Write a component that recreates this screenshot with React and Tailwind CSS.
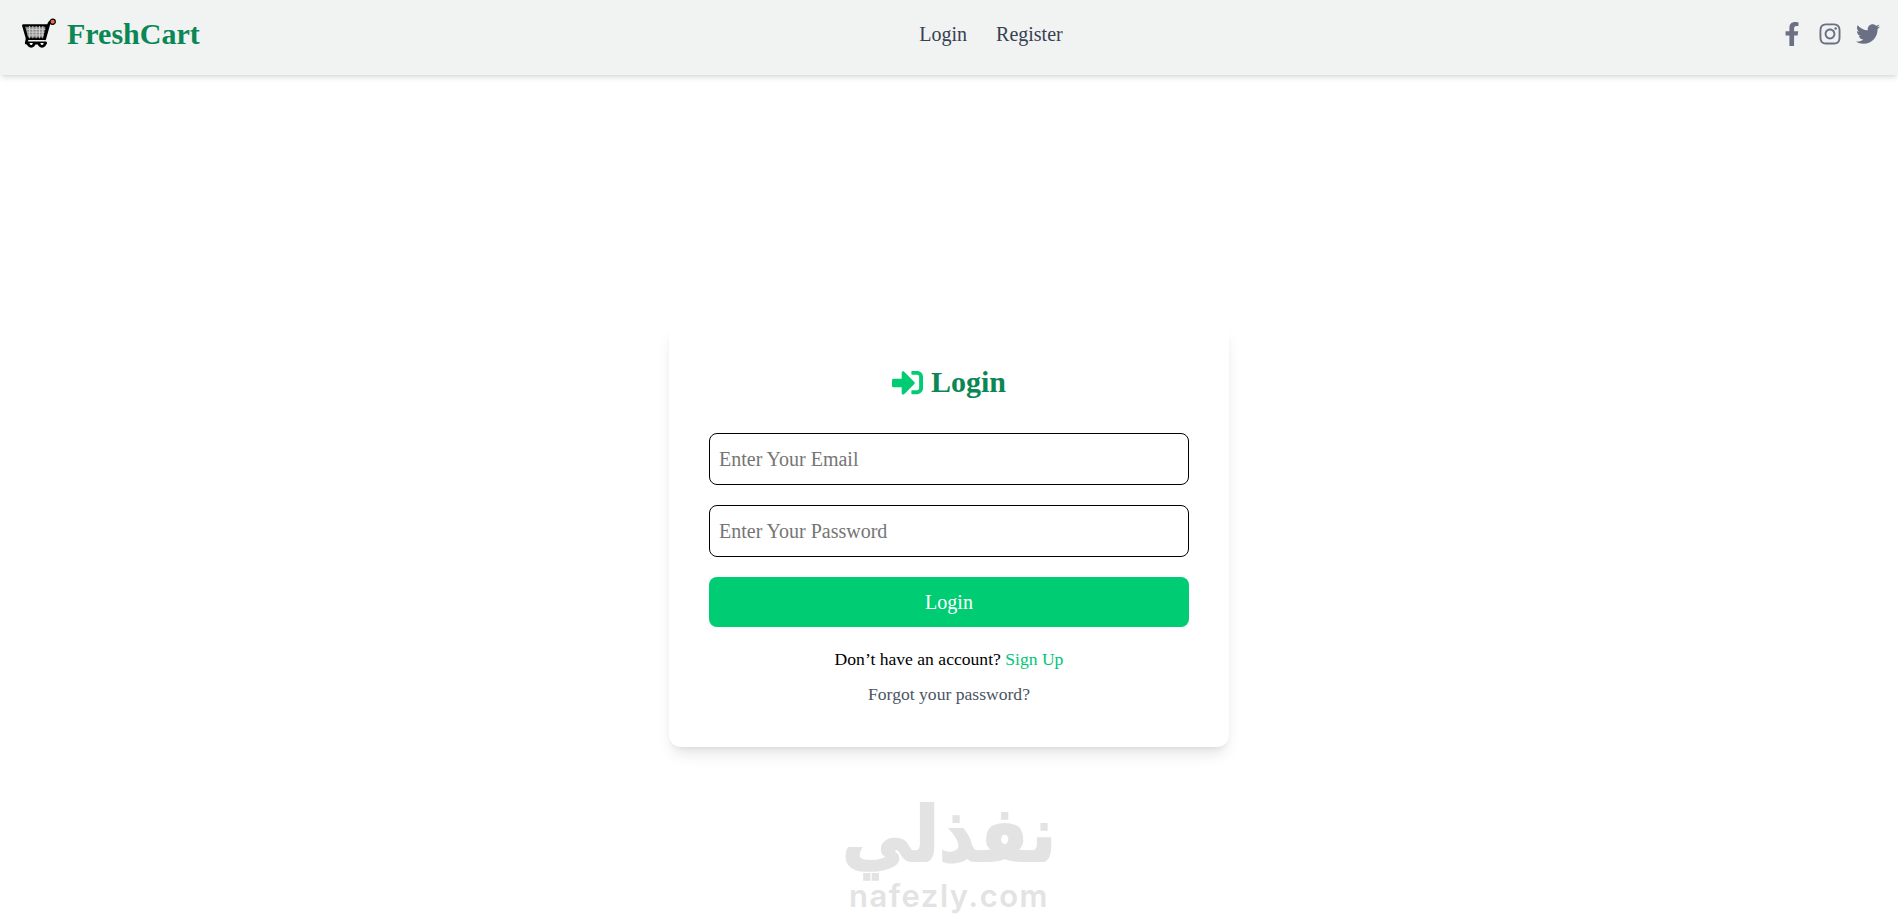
import React from "react";
import { FaFacebookF, FaInstagram, FaTwitter, FaSignInAlt } from "react-icons/fa";

function CartIcon() {
  return (
    <svg width="34" height="33" viewBox="0 0 36 34" fill="none">
      <path d="M1.5 7.5 L26.5 7.5 L23.5 21.5 L5.5 21.5 Z" fill="#8c8c8c" stroke="#000" strokeWidth="2.8" strokeLinejoin="round" />
      <path d="M5 11.5H25M5.5 14.5H24M6 17.5H23.5M8 8V21M11.5 8V21M15 8V21M18.5 8V21M22 8V21" stroke="#d8d8d8" strokeWidth="0.9" />
      <path d="M24 21.5 L28.5 5.5 Q29 3.5 31.5 3" stroke="#000" strokeWidth="3" strokeLinecap="round" />
      <path d="M5.5 21.5 L4.5 26 L25 26" stroke="#000" strokeWidth="3" strokeLinejoin="round" strokeLinecap="round" />
      <path d="M6.5 26 a3.2 3.6 0 0 0 6.4 0 M18 26 a3.2 3.6 0 0 0 6.4 0" fill="#fff" stroke="#000" strokeWidth="3" />
      <circle cx="32.5" cy="3.5" r="2.8" fill="#ea6a44" stroke="#000" strokeWidth="1.2" />
    </svg>
  );
}

export default function App() {
  return (
    <div className="relative h-[915px] overflow-hidden bg-white font-['Liberation_Serif',serif]">
      <nav className="flex h-[75px] items-center justify-between bg-[#f1f3f3] pb-[7px] pl-[22px] pr-[18px] shadow-md">
        <div className="flex w-[380px] items-center gap-[11px]">
          <CartIcon />
          <span className="text-[30px] font-bold leading-9 text-[#0a8754]">FreshCart</span>
        </div>
        <ul className="flex items-center gap-[29px] text-xl text-[#374151]">
          <li>Login</li>
          <li>Register</li>
        </ul>
        <div className="flex w-[300px] items-center justify-end gap-[14px] text-[24px] text-[#6b7085]">
          <FaFacebookF />
          <FaInstagram />
          <FaTwitter />
        </div>
      </nav>

      <main className="pt-[248px]">
        <div className="mx-auto h-[424px] w-[560px] rounded-xl bg-white px-10 pt-[41px] shadow-lg">
          <h1 className="flex items-center justify-center gap-2 text-[30px] font-bold leading-9 text-[#0a8754]">
            <FaSignInAlt className="text-[31px] text-[#00cc74]" />
            <span>Login</span>
          </h1>
          <form className="mt-[33px] flex flex-col gap-5">
            <input
              placeholder="Enter Your Email"
              className="h-[52px] w-full rounded-lg border border-black px-[9px] text-xl outline-none placeholder:text-[#757575]"
            />
            <input
              placeholder="Enter Your Password"
              className="h-[52px] w-full rounded-lg border border-black px-[9px] text-xl outline-none placeholder:text-[#757575]"
            />
            <button type="button" className="h-[50px] w-full rounded-lg bg-[#00cc74] text-xl text-white">
              Login
            </button>
          </form>
          <p className="mt-[18px] text-center text-[17.6px] leading-7 text-black">
            Don’t have an account? <span className="text-[#00c47a]">Sign Up</span>
          </p>
          <p className="mt-[7px] text-center text-[17.6px] leading-7 text-[#4b5563]">Forgot your password?</p>
        </div>
      </main>

      <div className="absolute bottom-0 left-[843px] flex w-[212px] flex-col items-center text-[#e3e3e3]">
        <span dir="rtl" className="mb-[-2px] translate-y-[9px] scale-y-110 font-['DejaVu_Sans',sans-serif] text-[70px] font-bold leading-normal [-webkit-text-stroke:2px_#e3e3e3]">نفذلي</span>
        <span className="font-['Inter',sans-serif] text-[31px] font-semibold leading-[38px] tracking-[1.5px]">nafezly.com</span>
      </div>
    </div>
  );
}
